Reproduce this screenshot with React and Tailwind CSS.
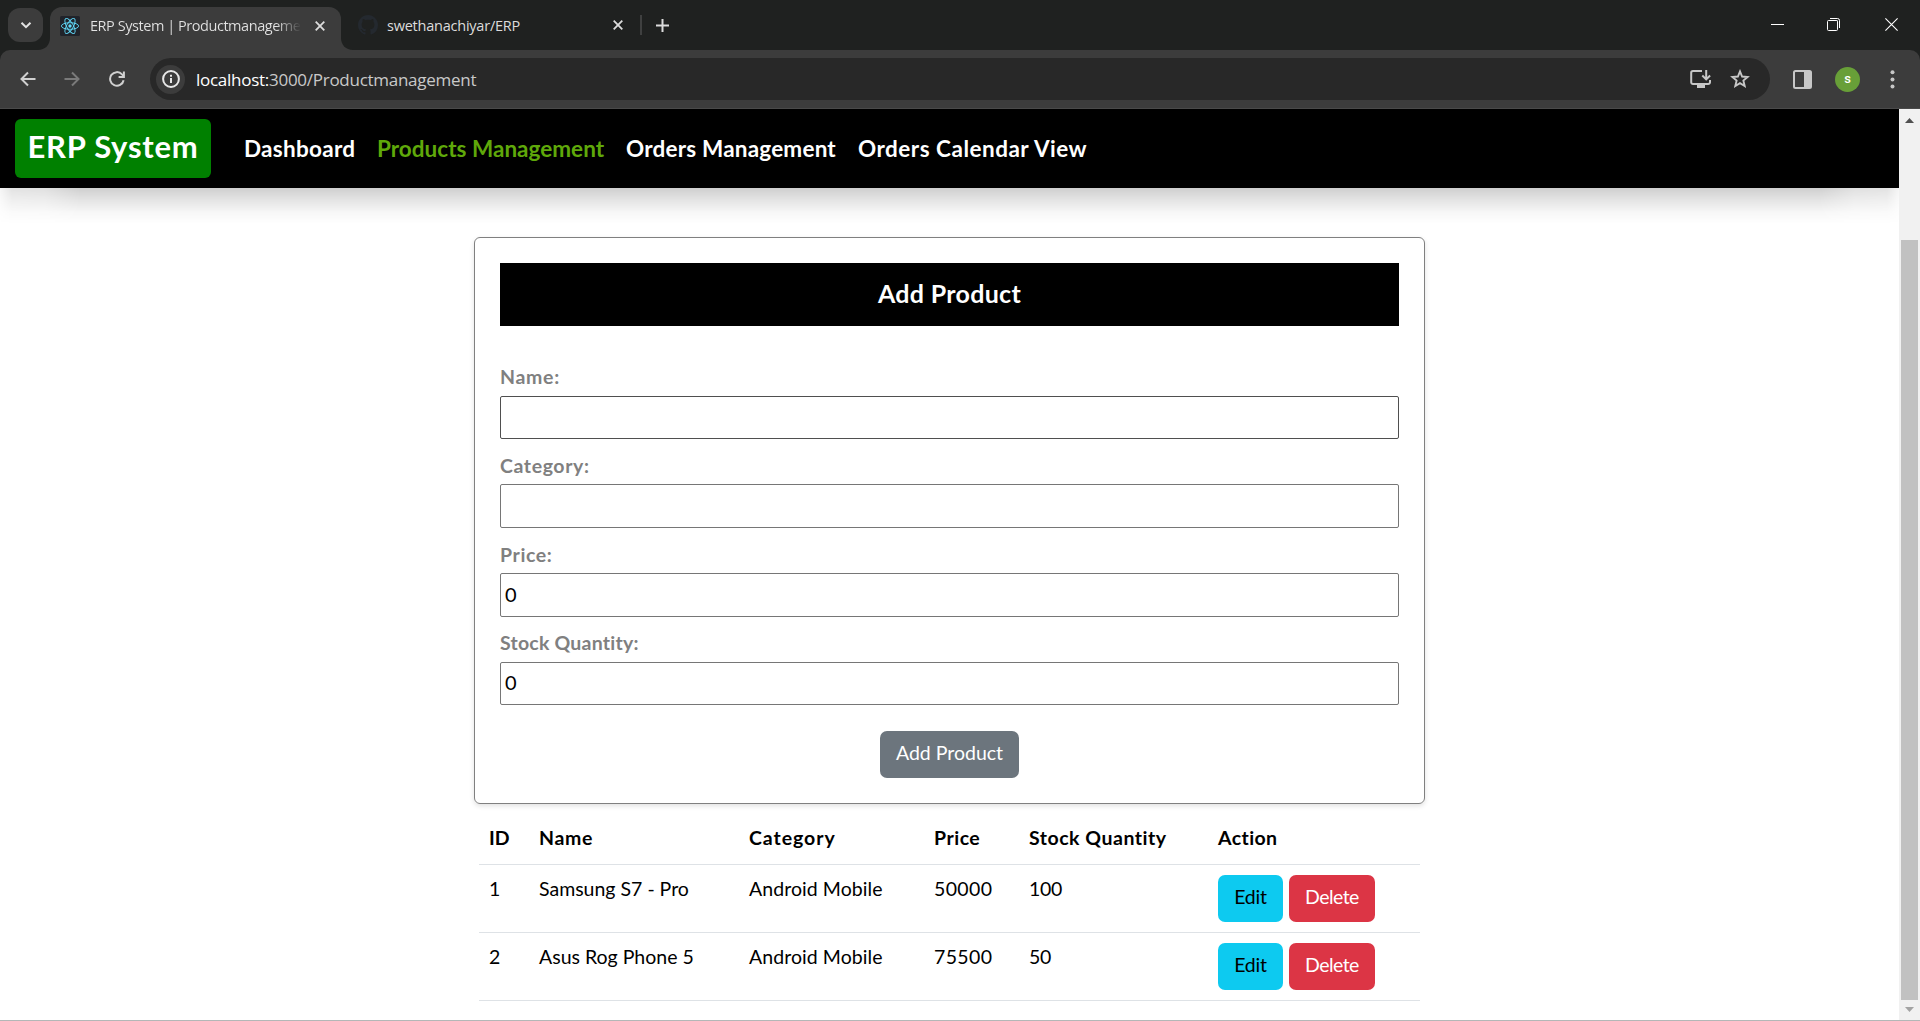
import React from "react";

const products = [
  { id: "1", name: "Samsung S7 - Pro", category: "Android Mobile", price: "50000", stock: "100" },
  { id: "2", name: "Asus Rog Phone 5", category: "Android Mobile", price: "75500", stock: "50" },
];

function ReactIcon() {
  return (
    <svg className="h-5 w-5 shrink-0" viewBox="0 0 20 20" fill="none">
      <rect width="20" height="20" rx="1.5" fill="#20232a" />
      <g stroke="#61dafb" strokeWidth="0.9">
        <ellipse cx="10" cy="10" rx="8.6" ry="3.3" />
        <ellipse cx="10" cy="10" rx="8.6" ry="3.3" transform="rotate(60 10 10)" />
        <ellipse cx="10" cy="10" rx="8.6" ry="3.3" transform="rotate(120 10 10)" />
      </g>
      <circle cx="10" cy="10" r="1.7" fill="#61dafb" />
    </svg>
  );
}

function GithubIcon() {
  return (
    <svg className="h-5 w-5 shrink-0" viewBox="0 0 16 16" fill="#24292f">
      <path d="M8 0C3.58 0 0 3.58 0 8c0 3.54 2.29 6.53 5.47 7.59.4.07.55-.17.55-.38 0-.19-.01-.82-.01-1.49-2.01.37-2.53-.49-2.69-.94-.09-.23-.48-.94-.82-1.13-.28-.15-.68-.52-.01-.53.63-.01 1.08.58 1.23.82.72 1.21 1.87.87 2.33.66.07-.52.28-.87.51-1.07-1.78-.2-3.64-.89-3.64-3.95 0-.87.31-1.59.82-2.15-.08-.2-.36-1.02.08-2.12 0 0 .67-.21 2.2.82.64-.18 1.32-.27 2-.27s1.36.09 2 .27c1.53-1.04 2.2-.82 2.2-.82.44 1.1.16 1.92.08 2.12.51.56.82 1.27.82 2.15 0 3.07-1.87 3.75-3.65 3.95.29.25.54.73.54 1.48 0 1.07-.01 1.93-.01 2.2 0 .21.15.46.55.38A8.01 8.01 0 0 0 16 8c0-4.42-3.58-8-8-8z" />
    </svg>
  );
}

function CloseIcon() {
  return (
    <svg className="h-[10px] w-[10px] shrink-0" viewBox="0 0 10 10" fill="none" stroke="#dcdcdc" strokeWidth="1.8">
      <path d="M0.7 0.7l8.6 8.6M9.3 0.7L0.7 9.3" />
    </svg>
  );
}

function TabStrip() {
  return (
    <div className="flex h-[50px] items-start bg-[#1f2120]">
      <div className="ml-2 mt-2 flex h-[34px] w-[35px] items-center justify-center rounded-[12px] bg-[#3c3c3c]">
        <svg className="h-3 w-3" viewBox="0 0 12 12" fill="none" stroke="#e3e3e3" strokeWidth="2">
          <path d="M1.5 3.7L6 8.2l4.5-4.5" />
        </svg>
      </div>
      <svg className="ml-[-5px] mt-[38px] h-3 w-3" viewBox="0 0 12 12" fill="#3c3c3c">
        <path d="M12 0v12H0C7 12 12 7 12 0z" />
      </svg>
      <div className="mt-[7px] flex h-[43px] w-[291px] items-center rounded-t-[12px] bg-[#3c3c3c] pb-[7px] pl-[10px] pt-[1px]">
        <ReactIcon />
        <span className="ml-[10px] w-[211px] overflow-hidden whitespace-nowrap bg-linear-to-r from-[#e3e3e3] from-88% to-transparent bg-clip-text text-[14.5px] tracking-[-0.45px] text-transparent">
          ERP System | Productmanagement
        </span>
        <span className="ml-[14px] flex">
          <CloseIcon />
        </span>
      </div>
      <svg className="mt-[38px] h-3 w-3" viewBox="0 0 12 12" fill="#3c3c3c">
        <path d="M0 0v12h12C5 12 0 7 0 0z" />
      </svg>
      <div className="mt-[7px] flex h-[36px] items-center">
        <span className="ml-[5px] flex">
          <GithubIcon />
        </span>
        <span className="ml-[9px] w-[226px] whitespace-nowrap pt-[1px] text-[14.5px] tracking-[-0.23px] text-[#dcdcdc]">swethanachiyar/ERP</span>
        <CloseIcon />
        <span className="ml-[17px] h-5 w-[2px] bg-[#3f4040]" />
        <svg className="ml-[14px] h-[13px] w-[13px]" viewBox="0 0 13 13" stroke="#dcdcdc" strokeWidth="2">
          <path d="M6.5 0v13M0 6.5h13" />
        </svg>
      </div>
      <div className="ml-auto mr-[22px] mt-[18px] flex items-center">
        <svg className="h-[13px] w-[13px]" viewBox="0 0 13 13" stroke="#fff" strokeWidth="1">
          <path d="M0 6.5h13" />
        </svg>
        <svg className="ml-[43px] h-[13px] w-[13px]" viewBox="0 0 13 13" fill="none" stroke="#fff" strokeWidth="1">
          <path d="M2.5 2.5h8v8" stroke="#8a8a8a" />
          <rect x="0.5" y="2.500" width="10" height="10" rx="1" />
          <path d="M3 0.5h7.5a2 2 0 0 1 2 2V10" />
        </svg>
        <svg className="ml-[45px] h-[13px] w-[13px]" viewBox="0 0 13 13" stroke="#fff" strokeWidth="1.1">
          <path d="M0.4 0.4l12.2 12.2M12.6 0.4L0.4 12.6" />
        </svg>
      </div>
    </div>
  );
}

function Toolbar() {
  return (
    <div className="bg-[#1f2120]">
      <div className="flex h-[59px] items-center rounded-t-[10px] border-b border-[#4a4a4a] bg-[#3c3c3c]">
        <svg className="ml-5 h-4 w-[16px]" viewBox="0 0 16 16" fill="none" stroke="#d0d0d0" strokeWidth="2">
          <path d="M15.5 8H1.8M8 1.5L1.5 8 8 14.5" />
        </svg>
        <svg className="ml-[28px] h-4 w-[16px]" viewBox="0 0 16 16" fill="none" stroke="#7a7a7a" strokeWidth="2">
          <path d="M0.5 8h13.7M8 1.5L14.5 8 8 14.5" />
        </svg>
        <svg className="ml-[29px] h-4 w-4" viewBox="0 0 16 16" fill="none" stroke="#d0d0d0" strokeWidth="2">
          <path d="M14.6 9.2A6.8 6.8 0 1 1 13 3.4L14.6 5" />
          <path d="M9.6 6h5.3V0.4" />
        </svg>
        <div className="ml-[25px] flex h-[42px] w-[1620px] items-center rounded-full bg-[#282828] pl-[6px] pr-[20px]">
          <span className="flex h-[29px] w-[29px] items-center justify-center rounded-full bg-[#3c3c3c]">
            <svg className="h-[18px] w-[18px]" viewBox="0 0 18 18" fill="none" stroke="#e8e8e8" strokeWidth="2">
              <circle cx="9" cy="9" r="7.9" />
              <path d="M9 8v5M9 4.8v1.9" />
            </svg>
          </span>
          <span className="ml-[11px] pt-[1px] text-[17px] tracking-[-0.27px] text-[#c9c9c9]">
            <span className="text-white">localhost:</span>3000/Productmanagement
          </span>
          <svg className="ml-auto h-5 w-[21px]" viewBox="0 0 21 20" fill="none" stroke="#c7c7c7" strokeWidth="2">
            <path d="M12 2H3a1.8 1.8 0 0 0-1.8 1.8v9.4A1.8 1.8 0 0 0 3 15h15.2a1.8 1.8 0 0 0 1.8-1.8V11" />
            <path d="M16.2 1v9M12.3 6.5l3.9 3.9 3.9-3.9" />
            <path d="M7 17.500h8" strokeWidth="3" />
          </svg>
          <svg className="ml-[19px] h-5 w-5" viewBox="0 0 20 20" fill="none" stroke="#c7c7c7" strokeWidth="1.9">
            <path d="M10 2.4l2.1 5.1 5.5.5-4.2 3.6 1.3 5.4L10 14.1 5.3 17l1.3-5.4L2.4 8l5.5-.5z" />
          </svg>
        </div>
        <svg className="ml-[23px] h-[19px] w-[19px]" viewBox="0 0 19 19" fill="none" stroke="#c7c7c7" strokeWidth="2">
          <rect x="1" y="1" width="17" height="17" rx="1.5" />
          <path d="M14.5 1v17" strokeWidth="7" />
        </svg>
        <span className="ml-[23px] flex h-[25px] w-[25px] items-center justify-center rounded-full bg-[#689f38] font-['Roboto'] text-[13px] font-medium text-white">s</span>
        <svg className="ml-[30px] h-[19px] w-[5px]" viewBox="0 0 5 19" fill="#c7c7c7">
          <circle cx="2.5" cy="2.2" r="2" />
          <circle cx="2.5" cy="9.4" r="2" />
          <circle cx="2.5" cy="16.6" r="2" />
        </svg>
      </div>
    </div>
  );
}

function NavBar() {
  return (
    <nav className="relative h-[79px] bg-black">
      <div className="flex h-full items-center pl-[15px] font-bold text-white">
        <span className="flex h-[59px] w-[196px] items-center justify-center rounded-[6px] bg-[#008000] pb-[5px] text-[31px] tracking-[0.75px]">
          ERP System
        </span>
        <div className="flex h-full items-center whitespace-nowrap text-[22.5px]">
          <span className="ml-[33px] w-[133px] tracking-[0.28px]">Dashboard</span>
          <span className="w-[249px] tracking-[0.02px] text-[#5fa80a]">Products Management</span>
          <span className="w-[232px] tracking-[0.2px]">Orders Management</span>
          <span className="tracking-[0.5px]">Orders Calendar View</span>
        </div>
      </div>
      <div className="pointer-events-none absolute inset-x-0 top-full h-[36px] bg-[linear-gradient(to_bottom,rgba(0,0,0,0.19),rgba(0,0,0,0.1)_35%,rgba(0,0,0,0.03)_68%,transparent)] [mask-image:linear-gradient(to_right,rgba(0,0,0,0.2),rgba(0,0,0,0.6)_12px,rgba(0,0,0,0.65)_45px,black_80px,black_calc(100%_-_80px),rgba(0,0,0,0.65)_calc(100%_-_45px),rgba(0,0,0,0.6)_calc(100%_-_12px),rgba(0,0,0,0.2))]" />
    </nav>
  );
}

function Field({ label, spacing, value, focused }) {
  return (
    <div className="h-[88.67px]">
      <div className={`flex h-[45px] items-center pt-[7.4px] text-[19.5px] font-bold text-[#808080] ${spacing}`}>{label}</div>
      <div
        className={`flex h-[43.67px] items-center rounded-[2px] border pb-[2px] pl-1 text-[20px] text-black ${
          focused ? "border-[#4f4f4f]" : "border-[#767676]"
        }`}
      >
        {value}
      </div>
    </div>
  );
}

function ProductForm() {
  return (
    <section className="mb-px ml-[474px] mt-[49px] h-[567px] w-[951px] rounded-[6px] border border-[#808080] p-[25px] shadow-[0_2px_5px_rgba(0,0,0,0.12)]">
      <h2 className="flex h-[63px] items-center justify-center bg-black pb-[1px] text-[25px] font-bold tracking-[0.3px] text-white">
        Add Product
      </h2>
      <div className="mt-[24.67px]">
        <Field label="Name:" spacing="tracking-[0.7px]" focused />
        <Field label="Category:" spacing="tracking-[0.6px]" />
        <Field label="Price:" spacing="tracking-[0.6px]" value="0" />
        <Field label="Stock Quantity:" spacing="tracking-[0.22px]" value="0" />
      </div>
      <div className="mx-auto mt-[25.66px] flex h-[47px] w-[139px] items-center justify-center rounded-[7px] bg-[#6c757d] pb-[4px] text-[19.5px] text-white">
        Add Product
      </div>
    </section>
  );
}

const columns = "grid grid-cols-[50px_210px_185px_95px_189px_1fr] border-b border-[#dee2e6] pl-[10px] text-[19.5px] text-black";

function ProductTable() {
  return (
    <section className="ml-[479px] w-[941px]">
      <div className={`${columns} h-[60px] items-center pt-[7px] font-bold`}>
        <span>ID</span>
        <span className="tracking-[0.7px]">Name</span>
        <span className="tracking-[0.95px]">Category</span>
        <span className="tracking-[0.5px]">Price</span>
        <span className="tracking-[0.52px]">Stock Quantity</span>
        <span className="tracking-[0.4px]">Action</span>
      </div>
      {products.map((p) => (
        <div key={p.id} className={`${columns} h-[68px] items-start leading-[30px]`}>
          <span className="pt-[9px]">{p.id}</span>
          <span className="pt-[9px]">{p.name}</span>
          <span className="pt-[9px] tracking-[0.06px]">{p.category}</span>
          <span className="pt-[9px] tracking-[0.36px]">{p.price}</span>
          <span className="pt-[9px] tracking-[-0.3px]">{p.stock}</span>
          <span className="flex gap-[6px] pt-[10px]">
            <span className="flex h-[47px] w-[65px] items-center justify-center rounded-[7px] bg-[#0dcaf0] pb-[4px] tracking-[-0.2px]">Edit</span>
            <span className="flex h-[47px] w-[86px] items-center justify-center rounded-[7px] bg-[#dc3545] pb-[4px] tracking-[-0.55px] text-white">Delete</span>
          </span>
        </div>
      ))}
    </section>
  );
}

function ScrollBar() {
  return (
    <div className="flex w-[21px] flex-col items-center bg-[#f1f1f1]">
      <svg className="mt-[9px] h-[5px] w-[9px]" viewBox="0 0 9 5" fill="#505050">
        <path d="M0 5L4.5 0 9 5z" />
      </svg>
      <div className="mt-[117px] h-[760px] w-[17px] bg-[#c1c1c1]" />
      <svg className="mt-[7px] h-[5px] w-[9px]" viewBox="0 0 9 5" fill="#a3a3a3">
        <path d="M0 0h9L4.5 5z" />
      </svg>
    </div>
  );
}

export default function App() {
  return (
    <div className="flex h-[1021px] w-[1920px] flex-col overflow-hidden bg-white font-['Open_Sans',sans-serif]">
      <TabStrip />
      <Toolbar />
      <div className="flex h-[911px] font-['Lato',sans-serif]">
        <main className="w-[1899px]">
          <NavBar />
          <ProductForm />
          <ProductTable />
        </main>
        <ScrollBar />
      </div>
      <div className="h-px bg-[#b3b7b7]" />
    </div>
  );
}
